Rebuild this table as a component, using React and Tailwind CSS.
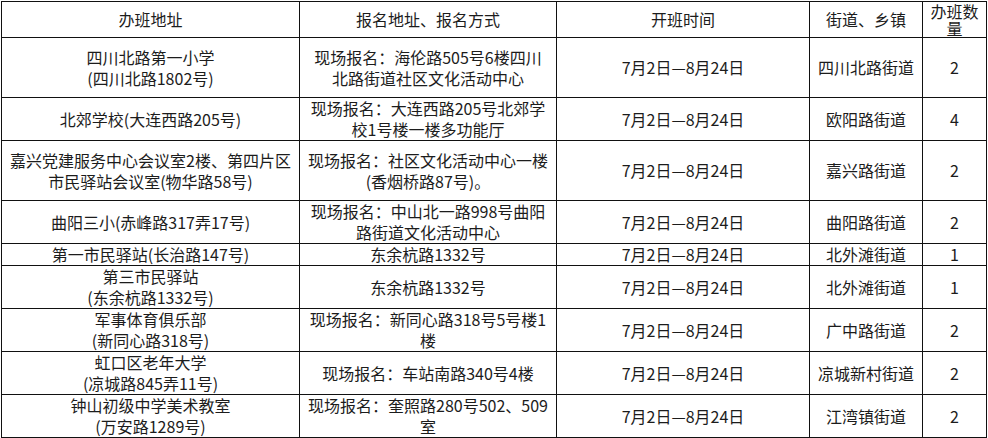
const rows = [
  {
    h: "h-[60px]",
    site: ["四川北路第一小学", "(四川北路1802号)"],
    sign: ["现场报名：海伦路505号6楼四川", "北路街道社区文化活动中心"],
    street: "四川北路街道",
    count: 2,
  },
  {
    h: "h-[43px]",
    site: ["北郊学校(大连西路205号)"],
    sign: ["现场报名：大连西路205号北郊学", "校1号楼一楼多功能厅"],
    street: "欧阳路街道",
    count: 4,
  },
  {
    h: "h-[60px]",
    site: ["嘉兴党建服务中心会议室2楼、第四片区", "市民驿站会议室(物华路58号)"],
    sign: ["现场报名：社区文化活动中心一楼", "(香烟桥路87号)。"],
    street: "嘉兴路街道",
    count: 2,
  },
  {
    h: "h-[43px]",
    site: ["曲阳三小(赤峰路317弄17号)"],
    sign: ["现场报名：中山北一路998号曲阳", "路街道文化活动中心"],
    street: "曲阳路街道",
    count: 2,
  },
  {
    h: "h-[22px]",
    site: ["第一市民驿站(长治路147号)"],
    sign: ["东余杭路1332号"],
    street: "北外滩街道",
    count: 1,
  },
  {
    h: "h-[43px]",
    site: ["第三市民驿站", "(东余杭路1332号)"],
    sign: ["东余杭路1332号"],
    street: "北外滩街道",
    count: 1,
  },
  {
    h: "h-[43px]",
    site: ["军事体育俱乐部", "(新同心路318号)"],
    sign: ["现场报名：新同心路318号5号楼1", "楼"],
    street: "广中路街道",
    count: 2,
  },
  {
    h: "h-[43px]",
    site: ["虹口区老年大学", "(凉城路845弄11号)"],
    sign: ["现场报名：车站南路340号4楼"],
    street: "凉城新村街道",
    count: 2,
  },
  {
    h: "h-[43px]",
    site: ["钟山初级中学美术教室", "(万安路1289号)"],
    sign: ["现场报名：奎照路280号502、509", "室"],
    street: "江湾镇街道",
    count: 2,
  },
];

function Lines({ items }) {
  return items.map((t, i) => (
    <span key={i} className="block whitespace-nowrap">
      {t}
    </span>
  ));
}

export default function App() {
  const cell = "border border-[#111] text-center align-middle p-0";
  return (
    <div
      className="w-[988px] h-[438px] bg-white pl-[1px] pt-[1px] overflow-hidden text-[#1c1c1c]"
      style={{ fontFamily: '"Noto Sans CJK SC", "Liberation Sans", sans-serif' }}
    >
      <table className="table-fixed border-collapse w-[985px] text-[16px] leading-[21px]">
        <colgroup>
          <col className="w-[298px]" />
          <col className="w-[257px]" />
          <col className="w-[253px]" />
          <col className="w-[113px]" />
          <col className="w-[64px]" />
        </colgroup>
        <thead>
          <tr className="h-[36px]">
            <th className={`${cell} font-normal`}>办班地址</th>
            <th className={`${cell} font-normal`}>报名地址、报名方式</th>
            <th className={`${cell} font-normal`}>开班时间</th>
            <th className={`${cell} font-normal`}>街道、乡镇</th>
            <th className={`${cell} font-normal leading-[17px]`}>
              <span className="block">办班数</span>
              <span className="block">量</span>
            </th>
          </tr>
        </thead>
        <tbody>
          {rows.map((r, i) => (
            <tr key={i} className={r.h}>
              <td className={cell}>
                <Lines items={r.site} />
              </td>
              <td className={cell}>
                <Lines items={r.sign} />
              </td>
              <td className={cell}>7月2日—8月24日</td>
              <td className={cell}>{r.street}</td>
              <td className={cell}>{r.count}</td>
            </tr>
          ))}
        </tbody>
      </table>
    </div>
  );
}
